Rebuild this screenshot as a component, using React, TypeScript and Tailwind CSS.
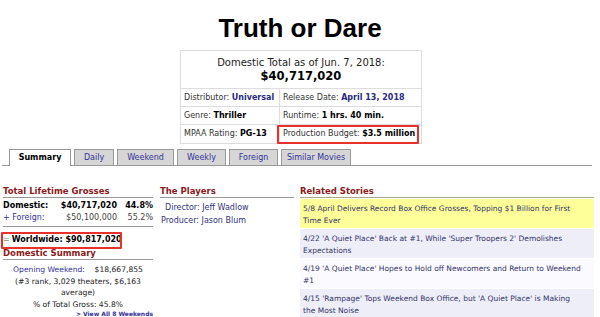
import React from "react";

const tabs = ["Summary", "Daily", "Weekend", "Weekly", "Foreign", "Similar Movies"];
const tabW = [62, 40, 57, 49, 49, 70];

const stories = [
  { t: "5/8 April Delivers Record Box Office Grosses, Topping $1 Billion for First Time Ever", bg: "bg-[#ffff99] pr-[3px]" },
  { t: "4/22 'A Quiet Place' Back at #1, While 'Super Troopers 2' Demolishes Expectations", bg: "bg-[#eeeef8] pr-[3px]" },
  { t: "4/19 'A Quiet Place' Hopes to Hold off Newcomers and Return to Weekend #1", bg: "bg-[#fbfbff] pr-[3px]" },
  { t: "4/15 'Rampage' Tops Weekend Box Office, but 'A Quiet Place' is Making the Most Noise", bg: "bg-[#eeeef8] pr-[20px]" },
];

export default function App() {
  return (
    <div className="w-[600px] h-[317px] bg-white overflow-hidden text-[#222] font-['DejaVu_Sans',sans-serif] text-[8px] leading-[12px]">
      <h1 className="text-center text-[26px] font-bold leading-[30px] pt-[13px] font-['Liberation_Sans',Arial,sans-serif] text-black">
        Truth or Dare
      </h1>
      <div className="relative ml-[180px] mt-[7px] w-[242px] border border-[#dddddd]">
        <div className="h-[38px] pt-[1px] flex flex-col items-center justify-center border-b border-[#dddddd]">
          <div className="text-[10px] leading-[13px] text-[#222]">Domestic Total as of Jun. 7, 2018:</div>
          <div className="text-[11.5px] leading-[15px] font-bold text-black">$40,717,020</div>
        </div>
        {[
          [<>Distributor: <b className="text-[#2a2a80]">Universal</b></>, <>Release Date: <b className="text-[#2a2a80]">April 13, 2018</b></>],
          [<>Genre: <b className="text-black">Thriller</b></>, <>Runtime: <b className="text-black">1 hrs. 40 min.</b></>],
          [<>MPAA Rating: <b className="text-black">PG-13</b></>, <>Production Budget: <b className="text-black">$3.5 million</b></>],
        ].map((r, i) => (
          <div key={i} className={`flex h-[18px] ${i < 2 ? "border-b border-[#dddddd]" : ""}`}>
            <div className="w-[99px] border-r border-[#dddddd] pl-[3px] flex items-center text-[#333]"><span>{r[0]}</span></div>
            <div className="flex-1 pl-[3px] flex items-center text-[#333]"><span>{r[1]}</span></div>
          </div>
        ))}
        <div className="absolute left-[96px] top-[74px] w-[142px] h-[19px] border-2 border-[#e8302c] rounded-[1px]" />
      </div>

      <div className="mt-[5px] ml-[2px] w-[590px] h-[17px] flex items-end border-b border-[#999999] pl-[7px] gap-[3px]">
        {tabs.map((t, i) => (
          <div
            key={t}
            style={{ width: tabW[i] }}
            className={
              i === 0
                ? "h-[17px] -mb-px bg-white border border-b-0 border-[#999999] flex items-center justify-center font-bold text-black"
                : "h-[16px] bg-[#d6d6d6] border border-[#999999] border-b-0 flex items-center justify-center text-[#333399]"
            }
          >
            {t}
          </div>
        ))}
      </div>

      <div className="flex mt-[20px]">
        <div className="w-[150px] ml-[3px]">
          <div className="font-bold text-[8.5px] leading-[10px] text-[#8b1a1a] border-b border-[#999999] pb-[1px]">Total Lifetime Grosses</div>
          <div className="flex h-[12px] mt-[2px] items-center font-bold text-black">
            <span className="w-[50px]">Domestic:</span>
            <span className="w-[64px] text-right">$40,717,020</span>
            <span className="flex-1 text-right">44.8%</span>
          </div>
          <div className="flex h-[11px] items-center text-[#444]">
            <span className="w-[50px] text-[#333399]">+ Foreign:</span>
            <span className="w-[64px] text-right">$50,100,000</span>
            <span className="flex-1 text-right">55.2%</span>
          </div>
          <div className="border-b border-[#999999] mt-[3px]" />
          <div className="relative h-[21px] flex items-end pb-[2px] font-bold text-black">
            <span className="font-normal text-[#888] mr-[2px]">=</span>Worldwide: $90,817,020
            <div className="absolute -left-[2px] top-[5px] w-[121px] h-[17px] border-2 border-[#e8302c] rounded-[1px]" />
          </div>
          <div className="font-bold text-[8.5px] leading-[10px] text-[#8b1a1a] border-b border-[#999999] pb-[1px]">Domestic Summary</div>
          <div className="text-center text-[7.6px] leading-[11.5px] mt-[4px]">
            <div><span className="text-[#333399]">Opening Weekend:</span>&nbsp;&nbsp;&nbsp; $18,667,855</div>
            <div>(#3 rank, 3,029 theaters, $6,163</div>
            <div>average)</div>
            <div>% of Total Gross: 45.8%</div>
          </div>
          <div className="text-right text-[6px] leading-[7px] font-bold text-[#333399]">&gt; View All 8 Weekends</div>
        </div>

        <div className="w-[134px] ml-[7px]">
          <div className="font-bold text-[8.5px] leading-[10px] text-[#8b1a1a] border-b border-[#999999] pb-[1px]">The Players</div>
          <div className="text-[#333380] leading-[13px] mt-[3px]">
            <div className="pl-[5px]">Director: Jeff Wadlow</div>
            <div className="pl-[1px]">Producer: Jason Blum</div>
          </div>
        </div>

        <div className="w-[294px] ml-[6px]">
          <div className="font-bold text-[8.5px] leading-[10px] text-[#8b1a1a] border-b border-[#aaa888] pb-[1px]">Related Stories</div>
          <div className="flex flex-col gap-[1px] mt-[1px]">
            {stories.map((s) => (
              <div key={s.t} className={`${s.bg} h-[29px] pl-[3px] pt-[4px] text-[7.5px] leading-[11.5px] text-[#333366]`}>
                {s.t}
              </div>
            ))}
          </div>
        </div>
      </div>
    </div>
  );
}
